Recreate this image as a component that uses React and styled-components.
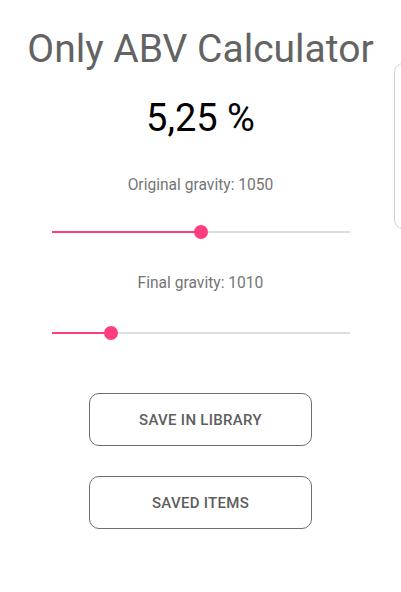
import React from "react";
import styled, { createGlobalStyle } from "styled-components";

const Global = createGlobalStyle`
  html, body { margin: 0; padding: 0; background: #ffffff; }
  body { font-family: Roboto, "Noto Sans", "Liberation Sans", sans-serif; }
`;

const Page = styled.div`
  position: relative;
  width: 401px;
  height: 592px;
  overflow: hidden;
  display: flex;
  flex-direction: column;
  align-items: center;
  padding-top: 26px;
  box-sizing: border-box;
`;

const Title = styled.h1`
  margin: 0;
  font-size: 39px;
  font-weight: 400;
  color: #636363;
  line-height: normal;
  letter-spacing: 0;
`;

const Value = styled.div`
  margin-top: 24px;
  font-size: 38px;
  color: #000;
  line-height: normal;
`;

const Label = styled.div`
  margin-top: ${(p) => p.$gap}px;
  font-size: 15.6px;
  color: #757575;
  line-height: normal;
`;

const SliderWrap = styled.div`
  margin-top: ${(p) => p.$gap}px;
  width: 298px;
  height: 30px;
  position: relative;
  display: flex;
  align-items: center;
`;

const Track = styled.div`
  width: 100%;
  height: 2px;
  background: #dedede;
  position: relative;
`;

const Fill = styled.div`
  position: absolute;
  left: 0;
  top: 0;
  height: 2px;
  background: #ff3d7f;
`;

const Thumb = styled.div`
  position: absolute;
  top: 50%;
  width: 14px;
  height: 14px;
  border-radius: 50%;
  background: #ff3d7f;
  transform: translate(-50%, -50%);
`;

const Button = styled.button`
  margin-top: ${(p) => p.$gap}px;
  width: 223px;
  height: 53px;
  border: 1px solid #6e6e6e;
  border-radius: 10px;
  background: #fff;
  font-family: Roboto, "Noto Sans", "Liberation Sans", sans-serif;
  font-size: 15px;
  font-weight: 500;
  color: #5e5e5e;
  letter-spacing: 0.3px;
  text-transform: uppercase;
  padding: 0;
`;

const SideCard = styled.div`
  position: absolute;
  left: 394px;
  top: 63px;
  width: 60px;
  height: 164px;
  border: 1px solid #d2d2d2;
  border-radius: 9px;
  background: #fff;
`;

function Slider({ value, gap }) {
  return (
    <SliderWrap $gap={gap}>
      <Track>
        <Fill style={{ width: `${value}%` }} />
        <Thumb style={{ left: `${value}%` }} />
      </Track>
    </SliderWrap>
  );
}

export default function App() {
  return (
    <>
      <Global />
      <Page>
        <Title>Only ABV Calculator</Title>
        <Value>5,25 %</Value>
        <Label $gap={36}>Original gravity: 1050</Label>
        <Slider value={50} gap={23} />
        <Label $gap={27}>Final gravity: 1010</Label>
        <Slider value={20} gap={26} />
        <Button $gap={45}>Save in library</Button>
        <Button $gap={30}>Saved items</Button>
        <SideCard />
      </Page>
    </>
  );
}
